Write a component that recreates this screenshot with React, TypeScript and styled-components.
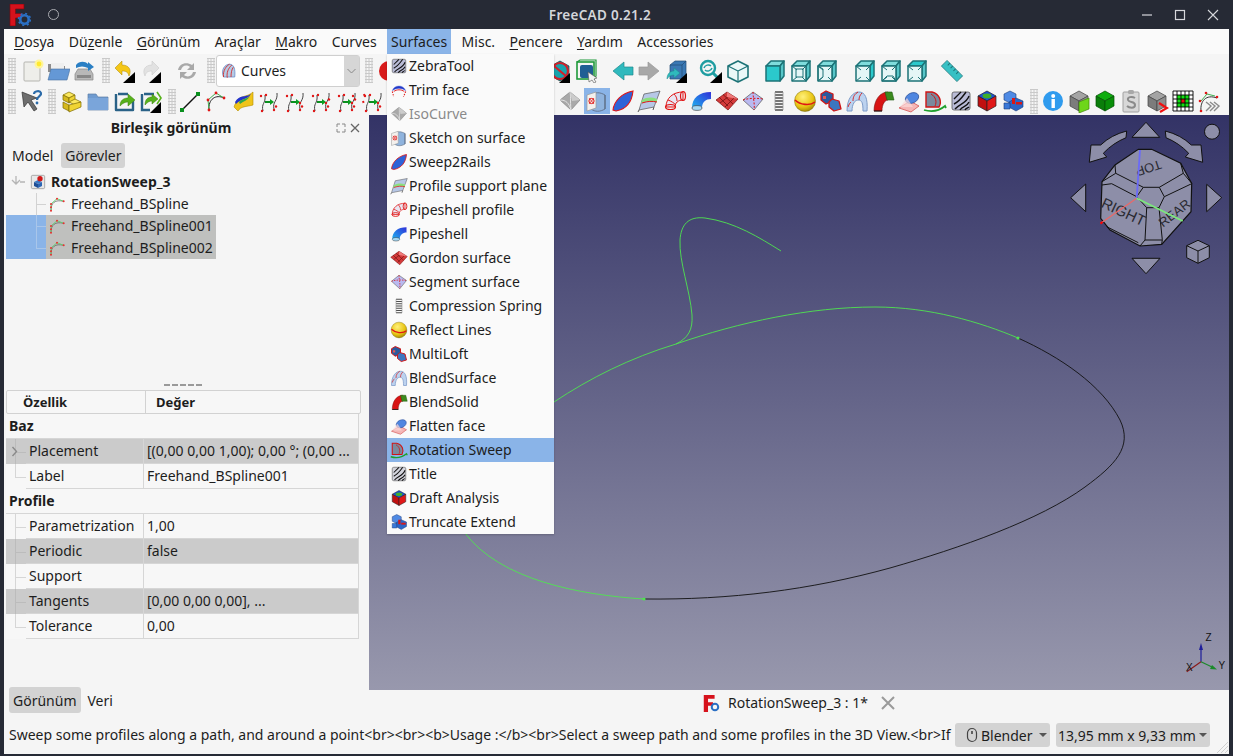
import React from "react";
import styled, { createGlobalStyle } from "styled-components";

const Global = createGlobalStyle`
  html, body { margin: 0; padding: 0; height: 100%; background: #262a35; }
  #root { height: 100%; }
  * { box-sizing: border-box; }
`;

const cube = (t: string, l: string, r: string, s = "#333") => (
  <g stroke={s} strokeWidth="0.7" strokeLinejoin="round">
    <polygon points="12,2 21,7 12,12 3,7" fill={t} />
    <polygon points="3,7 12,12 12,22 3,17" fill={l} />
    <polygon points="21,7 12,12 12,22 21,17" fill={r} />
  </g>
);

type Face = "front" | "back" | "left" | "right" | "top" | "bottom";
const viewCube = (face: Face) => {
  const on = "#2bc9cc";
  const off = "#e4f6f6";
  const st = { stroke: "#1d7377", strokeWidth: 1.5, strokeLinejoin: "round" as const };
  const inner = { stroke: "#1d7377", strokeWidth: 1, fill: "none" };
  return (
    <g>
      <polygon points="3,7 8,2 21,2 17,7" fill={face === "top" ? on : "#7fdcdc"} {...st} />
      <polygon points="17,7 21,2 21,17 17,22" fill={face === "right" ? on : "#57c6c8"} {...st} />
      <rect x="3" y="7" width="14" height="15" fill={face === "front" ? on : off} {...st} />
      {face === "back" && <rect x="7" y="10" width="7" height="8" fill={on} {...inner} />}
      {face === "left" && <polygon points="3,7 8,10 8,18 3,22" fill={on} {...inner} />}
      {face === "bottom" && <polygon points="3,22 8,17 14,17 17,22" fill={on} {...inner} />}
      {face !== "front" && <path d="M3 7l5 4M17 7l-4 4M3 22l5-4M17 22l-4-4" {...inner} />}
    </g>
  );
};

const zebra = (bg: string) => (
  <g>
    <rect x="3" y="3" width="18" height="18" rx="2" fill={bg} stroke="#555" strokeWidth="0.8" />
    <path d="M5 10C9 6 10 5 12 3M5 15c6-3 9-8 12-12M6 20c4-5 12-6 14-13M11 21c2-4 7-3 9-8M16 21c1-2 3-2 4-3" fill="none" stroke="#111" strokeWidth="1.4" />
  </g>
);

const splineArrow = (dots: number) => (
  <g>
    <path d="M6 22C4 14 9 15 8 6" fill="none" stroke="#444" strokeWidth="1" />
    <path d="M17 20c-2-7 4-8 3-16" fill="none" stroke="#444" strokeWidth="1" />
    <path d="M8 13h6" stroke="#0a8f1e" strokeWidth="2" />
    <path d="M13 10l4 3-4 3z" fill="#0a9f22" />
    {[[5, 22], [4, 7], [9, 6]].map(([x, y], i) => <circle key={i} cx={x} cy={y} r="1.2" fill="#e01515" />)}
    {Array.from({ length: dots }).map((_, i) => (
      <circle key={`d${i}`} cx={17 + (i % 2) * 2 + (i > 2 ? 1 : 0)} cy={21 - i * 3.5} r="1.2" fill="#e01515" />
    ))}
  </g>
);

const freehand = (
  <g fill="none">
    <path d="M3 22C3 10 9 5 22 8" stroke="#555" strokeWidth="1" />
    <path d="M3 22L3 12 12 4 22 8" stroke="#5fd06e" strokeWidth="1.4" />
    {[[3, 22], [3, 12], [12, 4], [22, 8], [3, 17]].map(([x, y], i) => <circle key={i} cx={x} cy={y} r="1.5" fill="#e83030" />)}
  </g>
);

const icons: Record<string, React.ReactNode> = {
  newDoc: <g><rect x="4" y="3" width="16" height="19" rx="1" fill="#eeeeea" stroke="#b5b5b0" /><circle cx="19" cy="5" r="4.5" fill="#fff59a" /><circle cx="19" cy="5" r="2.4" fill="#ffe92e" /></g>,
  open: <g><path d="M2 5h7l2 2h8v6H2z" fill="#8d8d8d" /><rect x="5" y="4" width="13" height="9" fill="#efefef" /><path d="M5 10h19l-3 11H2z" fill="#6498d6" stroke="#47719f" strokeWidth=".6" /></g>,
  save: <g><path d="M3 15l3-5h12l3 5v6H3z" fill="#b8b8b8" stroke="#888" strokeWidth=".7" /><rect x="5" y="16" width="14" height="3" fill="#888" /><path d="M4 6c3-4 9-4 12-1v-2l6 5-6 4V9C12 7 8 7 4 9z" fill="#2a7fc4" /></g>,
  undo: <g><path d="M3 9l7-7v4c7 0 10 5 7 11-1-4-3-5-7-5v4z" fill="#f5c717" stroke="#a98500" strokeWidth=".5" /><polygon points="23,13 23,24 11,24" fill="#000" /></g>,
  redo: <g><path d="M21 9l-7-7v4C7 6 4 11 7 17c1-4 3-5 7-5v4z" fill="#e2e2e2" stroke="#c4c4c4" strokeWidth=".5" /><polygon points="23,13 23,24 11,24" fill="#000" /></g>,
  refresh: <g fill="#a9a9a9"><path d="M3 11C4 5 11 2 17 6l2-2v7h-7l3-3c-4-3-8-1-9 3z" /><path d="M21 13c-1 6-8 9-14 5l-2 2v-7h7l-3 3c4 3 8 1 9-3z" /></g>,
  curvesWB: <g fill="none"><path d="M6 20C2 10 8 3 14 3s8 6 7 17z" fill="#b6cbe6" stroke="#6488c4" /><path d="M6 20C5 11 10 5 14 3M11 21c-1-7 1-12 6-17M16 20c0-6 1-10 3-13" stroke="#d42b2b" strokeWidth="1.2" /></g>,
  help: <g><path d="M3 3l15 6-6 2 6 9-3 2-6-9-4 5z" fill="#6e6e6e" stroke="#333" strokeWidth=".7" /><path d="M15 5c0-3 6-4 7-1 1 3-4 3-4 7" fill="none" stroke="#2a6aa8" strokeWidth="2.2" /><circle cx="18" cy="14" r="1.4" fill="#2a6aa8" /></g>,
  parts: <g stroke="#7d6a00" strokeWidth=".7" strokeLinejoin="round"><polygon points="9,3 15,6 9,9 3,6" fill="#fbe85e" /><polygon points="3,6 9,9 9,14 3,11" fill="#d6b91e" /><polygon points="15,6 9,9 9,14 15,11" fill="#f0d433" /><polygon points="15,10 21,13 15,16 9,13" fill="#fbe85e" /><polygon points="3,13 9,16 9,22 3,19" fill="#d6b91e" /><polygon points="21,13 21,18 9,23 9,16" fill="#f0d433" /></g>,
  folder: <g><path d="M2 5h8l2 3h10v13H2z" fill="#6f9bd0" stroke="#5e7fa7" strokeWidth=".7" /><rect x="2" y="9" width="20" height="12" fill="#7aa5da" /></g>,
  boxArrow: <g><path d="M6 5h10M4 5v16h17v-9" fill="none" stroke="#2a6287" strokeWidth="2.4" strokeLinejoin="round" /><path d="M8 17c0-6 4-8 8-8V5l7 6-7 6v-4c-3 0-5 1-8 4z" fill="#57b11b" stroke="#3c7f10" strokeWidth=".5" /></g>,
  boxArrow2: <g><path d="M6 5h10M4 5v16h8" fill="none" stroke="#2a6287" strokeWidth="2.4" /><path d="M7 16c0-6 3-8 7-8V5l6 5-6 5v-3c-3 0-4 1-7 4z" fill="#57b11b" stroke="#3c7f10" strokeWidth=".5" /><path d="M19 3l4 6-4 6" fill="none" stroke="#57b11b" strokeWidth="1.6" /><polygon points="23,13 23,24 12,24" fill="#000" /></g>,
  line: <g><path d="M4 21L20 5" stroke="#111" strokeWidth="1.4" /><rect x="2" y="19" width="4" height="4" fill="#0a8f1e" /><rect x="18" y="3" width="4" height="4" fill="#0a8f1e" /></g>,
  arc: <g fill="none"><path d="M5 21C4 10 12 5 20 9" stroke="#222" strokeWidth="1" /><path d="M5 21L4 11 12 4 20 9" stroke="#3fae4d" strokeWidth="1" />{[[5, 21], [4, 11], [12, 4], [20, 9]].map(([x, y], i) => <circle key={i} cx={x} cy={y} r="1.4" fill="#e01515" />)}</g>,
  surfY: <g><path d="M3 18C8 4 14 10 22 3v13c-7 2-12 1-15 6z" fill="#f0c419" stroke="#b28d00" strokeWidth=".6" /><path d="M4 13C9 5 14 9 20 5c-4 6-9 4-15 10z" fill="#2233cc" /><path d="M8 13c4-4 7-2 11-6-2 4-6 5-10 8z" fill="#2ea84a" /></g>,
  sp1: splineArrow(2), sp2: splineArrow(3), sp3: splineArrow(4), sp4: splineArrow(5),
  sp5: <g>{splineArrow(3)}<path d="M3 5l1 3M2 12l1 3" stroke="#e01515" strokeWidth="2" strokeDasharray="2 2" /></g>,
  record: <circle cx="12" cy="12" r="10" fill="#d81a1a" />,
  stop: <g><polygon points="12,2 21,7 21,17 12,22 3,17 3,7" fill="#16a3ad" stroke="#111" strokeWidth=".6" /><circle cx="12" cy="12" r="8" fill="none" stroke="#d0202a" strokeWidth="2.2" /><path d="M6 7l12 10" stroke="#d0202a" strokeWidth="2.2" /><polygon points="22,14 22,24 11,24" fill="#000" /></g>,
  selectBox: <g><rect x="3" y="3" width="17" height="17" fill="none" stroke="#1f9a3a" strokeWidth="1.6" /><path d="M3 3l3-2h16v16l-2 3" fill="none" stroke="#1f9a3a" strokeWidth="1.2" /><rect x="6" y="6" width="13" height="13" rx="2" fill="#1f5e94" /><path d="M14 13l9 6-3 1 2 3-2 1-2-3-3 2z" fill="#f3f3f3" stroke="#555" strokeWidth=".6" /></g>,
  arrowL: <polygon points="2,12 13,3 13,8 22,8 22,16 13,16 13,21" fill="#2fb9bd" stroke="#1f8a8d" strokeWidth=".7" />,
  arrowR: <polygon points="22,12 11,3 11,8 2,8 2,16 11,16 11,21" fill="#a8a8a8" stroke="#999" strokeWidth=".7" />,
  boxView: <g><polygon points="6,6 11,2 22,2 22,16 18,20 6,20" fill="#3a78b4" stroke="#234a73" strokeWidth=".7" /><path d="M6 6h12v14M18 6l4-4" stroke="#234a73" fill="none" strokeWidth=".7" /><path d="M3 20c0-6 4-8 7-8V9l6 5-6 5v-3c-3 0-5 1-7 4z" fill="#2fb9bd" stroke="#1f8a8d" strokeWidth=".5" /><polygon points="23,14 23,24 12,24" fill="#000" /></g>,
  searchView: <g><circle cx="9" cy="9" r="7" fill="none" stroke="#1f9da1" strokeWidth="2.4" /><path d="M5 9c1-3 5-4 7-2M13 9c-1 3-5 4-7 2" fill="none" stroke="#1f9da1" strokeWidth="1.5" /><path d="M14 14l5 5" stroke="#1f9da1" strokeWidth="3" /><polygon points="23,13 23,24 11,24" fill="#000" /></g>,
  wire: <g fill="#eaf8f8" stroke="#1d7377" strokeWidth="1.6" strokeLinejoin="round"><polygon points="12,2 22,7 22,18 12,23 2,18 2,7" /><path d="M2 7l10 5 10-5M12 12v11" fill="none" strokeWidth="1.2" /></g>,
  vFront: viewCube("front"), vBack: viewCube("back"), vLeft: viewCube("left"),
  vWire1: viewCube("right"), vWire2: viewCube("bottom"), vWire3: viewCube("top"),
  ruler: <g transform="rotate(45 12 12)"><rect x="1" y="8" width="22" height="8" fill="#37c0c4" stroke="#1d7377" strokeWidth=".7" /><path d="M5 8v3M9 8v3M13 8v3M17 8v3" stroke="#1d7377" /></g>,
  info: <g><circle cx="12" cy="12" r="10" fill="#2f9bee" /><rect x="10.5" y="10" width="3.4" height="9" fill="#fff" /><circle cx="12.2" cy="7" r="2" fill="#fff" /></g>,
  cubeGreenPlane: <g>{cube("#a4a4a4", "#7c7c7c", "#8e8e8e", "#444")}<polygon points="12,13 22,9 22,20 12,24" fill="#6ed61a" stroke="#3f8a07" strokeWidth=".7" /></g>,
  cubeGreen: cube("#0fad0f", "#0a7e0a", "#098f09", "#054d05"),
  clipS: <g><rect x="4" y="3" width="16" height="20" rx="1" fill="#d8d8d8" stroke="#a0a0a0" /><rect x="9" y="1" width="6" height="4" rx="1.5" fill="#a8a8a8" /><path d="M16 9c-3-2-8-1-7 2 1 3 7 1 7 5s-6 3-8 1" fill="none" stroke="#8a8a8a" strokeWidth="2" /></g>,
  cubeChevron: <g>{cube("#a4a4a4", "#7c7c7c", "#8e8e8e", "#444")}<path d="M14 14l8 5-7 4" fill="none" stroke="#f01010" strokeWidth="2.2" /></g>,
  gridTarget: <g><rect x="2" y="2" width="20" height="20" fill="#fff" /><rect x="6" y="6" width="12" height="12" fill="#12df12" /><rect x="10" y="10" width="4" height="4" fill="#e41010" /><path d="M2 2v20M6 2v20M10 2v20M14 2v20M18 2v20M22 2v20M2 2h20M2 6h20M2 10h20M2 14h20M2 18h20M2 22h20" stroke="#000" strokeWidth=".9" /></g>,
  splineChev: <g fill="none"><path d="M4 22C3 12 9 5 20 9" stroke="#333" /><path d="M4 12l6-7 8 2" stroke="#3fae4d" />{[[4, 22], [3, 12], [9, 4], [20, 8]].map(([x, y], i) => <circle key={i} cx={x} cy={y} r="1.3" fill="#e01515" />)}<path d="M9 13l5 4-5 5M13 13l5 4-5 5M17 13l5 4-5 5" stroke="#8a8a8a" strokeWidth="1.4" /></g>,
  freehand,
  doc: <g><rect x="2" y="2" width="20" height="20" rx="2" fill="#e8e8e8" stroke="#8a8a8a" /><polygon points="12,9 18,12 12,15 6,12" fill="#3a78c4" /><polygon points="6,12 12,15 12,21 6,18" fill="#1f4f96" /><polygon points="18,12 12,15 12,21 18,18" fill="#2c66b4" /><circle cx="15" cy="7" r="4" fill="#d01818" /></g>,
  zebraT: zebra("#b9bbd6"), title: zebra("#d3d4dd"),
  trim: <g><path d="M3 13C5 5 18 4 21 13 15 9 9 9 3 13z" fill="#2238c8" stroke="#6a7fe0" strokeWidth=".6" /><path d="M3 14l2 7M21 14l-3 7" stroke="#e01515" strokeWidth="1.4" strokeDasharray="2 1.5" /><path d="M5 14c4-3 10-3 14 0" fill="none" stroke="#e01515" strokeWidth="1.2" /></g>,
  iso: <g><polygon points="12,3 22,11 13,21 2,11" fill="#a9a9a9" stroke="#777" strokeWidth=".6" /><path d="M2 11c6 0 9 3 11 10M12 3c1 4 0 8 1 18" fill="none" stroke="#e3e3e3" /><polygon points="12,3 22,11 14,12" fill="#ccc" /></g>,
  sketchSurf: <g><path d="M6 6c4-3 9-3 14 0v14c-5 3-10 3-14 0z" fill="#8fb3dd" stroke="#5a6a80" strokeWidth=".8" /><path d="M20 6v14" stroke="#5a6a80" /><polygon points="2,6 11,3 11,19 2,22" fill="#f3f1ee" stroke="#999" strokeWidth=".7" /><circle cx="6.5" cy="12" r="2.6" fill="none" stroke="#e01515" /><path d="M4 15l5-6M4 9l5 6" stroke="#e01515" strokeWidth=".7" /></g>,
  sweep2: <path d="M2 21C3 12 11 4 22 2c-1 10-6 18-17 20z" fill="#2f63d8" stroke="#e01515" strokeWidth="1.1" />,
  profile: <g><polygon points="2,21 7,5 23,2 17,18" fill="#b7c7e6" stroke="#555" strokeWidth=".7" /><path d="M5 11c5-3 10-3 15-1v3c-6-2-10-1-16 1z" fill="#8be07e" /><path d="M5 14c6-2 10-2 15-1" stroke="#e01515" fill="none" /><path d="M2 21l-1 2M17 18l-1 3" stroke="#555" /></g>,
  pipeProfile: <g fill="none" stroke="#e01515"><path d="M3 18C3 9 10 3 20 3v8c-5 0-8 3-8 7z" fill="#e9e6f2" /><ellipse cx="7.5" cy="18" rx="5" ry="2.5" strokeWidth="1.2" /><ellipse cx="20" cy="7" rx="2.5" ry="4.5" strokeWidth="1.2" /><path d="M5 11c3 1 6 3 8 5M11 5c2 2 3 4 3 7" strokeWidth="1" /></g>,
  pipeshell: <g><defs><linearGradient id="pipeg" x1="0" y1="1" x2="1" y2="0"><stop offset="0" stopColor="#1fb4f0" /><stop offset="1" stopColor="#2f2fd8" /></linearGradient></defs><path d="M3 19C3 9 10 3 22 3v7c-5 0-9 3-9 9z" fill="url(#pipeg)" /><ellipse cx="8" cy="19" rx="5" ry="2.4" fill="#a4d8f4" stroke="#333" strokeWidth=".6" /></g>,
  gordon: <g><polygon points="12,3 23,10 13,21 1,11" fill="#d43a3a" stroke="#7a1010" strokeWidth=".7" /><path d="M8 5.5L18 15M4 8l9 9M16 5.6L5 14M20 8l-10 10" stroke="#701010" strokeWidth=".8" fill="none" /><polygon points="12,3 23,10 12,8" fill="#ef7a7a" /></g>,
  segment: <g><polygon points="12,3 22,10 13,21 2,11" fill="#b9b9f0" stroke="#555" strokeWidth=".7" /><path d="M12 3c0 6 2 12 1 18M2 11c6-2 14-2 20-1" stroke="#e01515" strokeDasharray="2 1.5" fill="none" /></g>,
  spring: <g stroke="#4e4e4e" strokeWidth="1.4" fill="none"><path d="M8 3h8M8 6h8M8 9h8M8 12h8M8 15h8M8 18h8M8 21h8" /><path d="M8 3v18M16 3v18" stroke="#999" strokeWidth=".8" /></g>,
  sphere: <g><defs><radialGradient id="sphg" cx=".4" cy=".3" r=".8"><stop offset="0" stopColor="#fff07a" /><stop offset=".6" stopColor="#e8c412" /><stop offset="1" stopColor="#8c7400" /></radialGradient></defs><circle cx="12" cy="12" r="10.5" fill="url(#sphg)" stroke="#7a6a00" strokeWidth=".5" /><path d="M2 11c5 5 15 6 20 2" fill="none" stroke="#e01515" strokeWidth="1.6" /></g>,
  multiloft: <g stroke="#d01515" strokeWidth="1.3" strokeLinejoin="round"><polygon points="7,2 14,5 14,12 7,15 2,11 2,5" fill="#2a5a9e" /><polygon points="13,10 20,12 22,20 15,22 10,18 10,13" fill="#3d76c0" /><rect x="4" y="7" width="3" height="3" fill="#e05a5a" stroke="none" /></g>,
  blendSurf: <g fill="none"><path d="M2 22C2 9 8 3 14 3s9 6 8 19h-4c0-8-1-11-5-11-3 0-6 4-6 11z" fill="#bcd2ef" stroke="#7d9bc8" /><path d="M8 12C8 7 10 5 13 3M14 11c0-3 1-5 3-7" stroke="#d42b2b" /><path d="M3 18c1-3 2-4 3-5" stroke="#d42b2b" /></g>,
  blendSolid: <g><path d="M3 22C3 11 9 3 17 3v8c-3 0-6 4-6 11z" fill="#d81414" stroke="#7a1010" strokeWidth=".6" /><path d="M14 3h7l2 8h-7z" fill="#3c8a1e" stroke="#1f5a10" strokeWidth=".6" /><path d="M3 22h8" stroke="#111" /></g>,
  flatten: <g><polygon points="2,19 13,12 22,17 14,23" fill="#f4b6b6" stroke="#d04040" strokeWidth=".7" /><ellipse cx="15" cy="9" rx="7" ry="5" fill="#4f86e0" stroke="#2a4f9a" strokeWidth=".7" transform="rotate(-25 15 9)" /><path d="M3 18l7-9 6 9" fill="#fbd9d9" opacity=".7" /></g>,
  rotSweep: <g><path d="M3 3h6c8 2 10 10 7 15H3z" fill="#7b8a9e" stroke="#d01515" strokeWidth="1.4" /><path d="M8 5c5 3 6 8 4 12" fill="none" stroke="#d01515" /><path d="M1 21c7 2 15 1 21-4l1 2" fill="none" stroke="#1fa02c" strokeWidth="1.8" /></g>,
  draft: <g>{cube("#1a4fd8", "#c01010", "#e01818", "#222")}<ellipse cx="12" cy="7" rx="4.5" ry="2.4" fill="#3fae2a" /></g>,
  truncate: <g stroke="#1a3a78" strokeWidth=".6" strokeLinejoin="round"><polygon points="9,2 15,5 15,11 9,14 3,11 3,5" fill="#4f8ae4" /><polygon points="15,9 22,12 22,18 15,22 8,18 8,13" fill="#2a66c8" /><rect x="11" y="9" width="3" height="6" fill="#d81818" stroke="none" /><rect x="15" y="13" width="6" height="2.5" fill="#d81818" stroke="none" /><rect x="3" y="14" width="6" height="6" fill="#3a78d8" /></g>,
};

const Svg = styled.svg<{ $size: number }>`
  width: ${(p) => p.$size}px;
  height: ${(p) => p.$size}px;
  flex: none;
  display: block;
`;

const Icon = ({ name, size = 24 }: { name: string; size?: number }) => (
  <Svg $size={size} viewBox="0 0 24 24" aria-hidden="true">{icons[name]}</Svg>
);

const Window = styled.div`
  height: 756px;
  width: 1233px;
  overflow: hidden;
  display: flex;
  flex-direction: column;
  padding: 0 4px 2px;
  background: #262a35;
  font-family: "Noto Sans", sans-serif;
  font-size: 14px;
  color: #1d1d1d;
`;

const TitleBar = styled.header`
  height: 29px;
  flex: none;
  display: flex;
  align-items: center;
  color: #d4d6da;
`;
const Logo = styled.div`
  width: 22px;
  height: 22px;
  margin: 0 0 0 5px;
  flex: none;
`;
const PinDot = styled.span`
  width: 11px;
  height: 11px;
  margin-left: 17px;
  border-radius: 50%;
  border: 1.5px solid #a9abb0;
  flex: none;
`;
const TitleText = styled.div`
  flex: 1;
  text-align: center;
  font-size: 13.5px;
  font-weight: 600;
  letter-spacing: 0.3px;
  padding-left: 4px;
`;
const WinButtons = styled.div`
  display: flex;
  gap: 13px;
  margin-right: 6px;
`;
const WinBtn = styled.svg`
  width: 20px;
  height: 20px;
  display: block;
`;

const Content = styled.div`
  flex: 1;
  min-height: 0;
  position: relative;
  display: flex;
  flex-direction: column;
  background: #f5f5f5;
`;

const MenuBar = styled.nav`
  height: 25px;
  flex: none;
  display: flex;
  gap: 6.4px;
  padding-left: 6px;
  background: #fafafa;
`;
const MenuItem = styled.div<{ $open?: boolean }>`
  padding: 0 4px;
  line-height: 25px;
  background: ${(p) => (p.$open ? "#8ab4e8" : "transparent")};
  white-space: nowrap;
  u { text-underline-offset: 2px; text-decoration-thickness: 1px; }
`;

const ToolRow = styled.div<{ $h: number }>`
  height: ${(p) => p.$h}px;
  flex: none;
  display: flex;
  align-items: center;
`;
const Grip = styled.span<{ $ml: number; $mr: number }>`
  width: 8px;
  height: 25px;
  margin: 0 ${(p) => p.$mr}px 0 ${(p) => p.$ml}px;
  flex: none;
  background-image: radial-gradient(circle, #c9c9c9 1px, transparent 1.1px);
  background-size: 3px 3px;
  background-position: center;
`;
const ToolBtn = styled.div<{ $active?: boolean }>`
  width: 26px;
  height: 26px;
  flex: none;
  display: flex;
  align-items: center;
  justify-content: center;
  background: ${(p) => (p.$active ? "#8ab4e8" : "transparent")};
`;
const Spacer = styled.span<{ $w: number }>`
  width: ${(p) => p.$w}px;
  flex: none;
`;
const WorkbenchCombo = styled.div`
  width: 144px;
  height: 32px;
  margin-left: 1px;
  flex: none;
  display: flex;
  align-items: stretch;
  background: #fff;
  border: 1px solid #cfcfcf;
  border-radius: 3px;
`;
const ComboLabel = styled.div`
  flex: 1;
  display: flex;
  align-items: center;
  gap: 4px;
  padding-left: 2px;
`;
const ComboArrow = styled.div`
  width: 15px;
  display: flex;
  align-items: center;
  justify-content: center;
  background: #d6d6d6;
`;

const Main = styled.div`
  flex: 1;
  min-height: 0;
  display: flex;
`;
const Sidebar = styled.aside`
  width: 365px;
  flex: none;
  display: flex;
  flex-direction: column;
  padding-left: 2px;
`;
const DockHeader = styled.div`
  height: 25px;
  display: flex;
  align-items: center;
  flex: none;
`;
const DockTitle = styled.div`
  flex: 1;
  text-align: center;
  font-weight: 700;
  font-size: 14px;
`;
const DockButtons = styled.div`
  display: flex;
  gap: 4px;
  width: 29px;
  margin-right: 4px;
  color: #777;
`;
const TabStrip = styled.div`
  display: flex;
  gap: 4px;
  height: 25px;
  margin: 3px 0 0 2px;
  flex: none;
`;
const Tab = styled.div<{ $active?: boolean; $lh?: number }>`
  padding: 0 4px;
  line-height: ${(p) => p.$lh ?? 25}px;
  border-radius: 3px;
  background: ${(p) => (p.$active ? "#d3d3d3" : "transparent")};
`;
const Tree = styled.div`
  margin-top: 3px;
  height: 213px;
  flex: none;
`;
const TreeRow = styled.div`
  height: 22px;
  display: flex;
  align-items: stretch;
`;
const TreeIndent = styled.div<{ $selected?: boolean; $end?: boolean }>`
  width: 40px;
  flex: none;
  position: relative;
  background: ${(p) => (p.$selected ? "#8ab4e8" : "transparent")};
  &::before {
    content: "";
    position: absolute;
    left: 30px;
    top: 0;
    bottom: ${(p) => (p.$end ? "50%" : "0")};
    border-left: 1px solid ${(p) => (p.$selected ? "#a9c6ea" : "#d2d2d2")};
  }
  &::after {
    content: "";
    position: absolute;
    left: 30px;
    width: 10px;
    top: 50%;
    border-top: 1px solid ${(p) => (p.$selected ? "#a9c6ea" : "#d2d2d2")};
  }
`;
const TreeRootBranch = styled.div`
  width: 24px;
  flex: none;
  display: flex;
  align-items: center;
  padding-left: 3px;
`;
const TreeLabel = styled.div<{ $selected?: boolean }>`
  display: flex;
  align-items: center;
  gap: 6px;
  padding: 0 3px 0 3px;
  background: ${(p) => (p.$selected ? "#bfc0be" : "transparent")};
`;
const RootLabel = styled.div`
  display: flex;
  align-items: center;
  gap: 5px;
  font-weight: 700;
`;
const RowText = styled.span`
  padding-bottom: 2px;
`;
const Splitter = styled.div`
  width: 38px;
  height: 2px;
  margin: 0 0 4px 158px;
  flex: none;
  background: repeating-linear-gradient(90deg, #9a9a9a 0 6px, transparent 6px 8px);
`;
const PropTable = styled.div`
  width: 353px;
  flex: none;
`;
const PropHeader = styled.div`
  width: 355px;
  height: 24px;
  display: grid;
  grid-template-columns: 138px 1fr;
  border: 1px solid #d2d2d2;
  border-radius: 2px;
  background: #f7f7f7;
  font-weight: 700;
  font-size: 13px;
  line-height: 22px;
`;
const HeadCell = styled.div`
  padding-left: 16px;
  & + & { border-left: 1px solid #d2d2d2; padding-left: 10px; }
`;
const PropBody = styled.div`
  border-right: 1px solid #d6d6d6;
  background: #f7f7f7;
`;
const GroupRow = styled.div`
  height: 25px;
  line-height: 24px;
  padding-left: 3px;
  font-weight: 700;
  border-bottom: 1px solid #d6d6d6;
`;
const PropRow = styled.div<{ $alt?: boolean }>`
  height: 25px;
  display: grid;
  grid-template-columns: 20px 117px 1fr;
  background: ${(p) => (p.$alt ? "#cbcbcb" : "#f7f7f7")};
  line-height: 24px;
`;
const Branch = styled.div<{ $last?: boolean; $alt?: boolean }>`
  position: relative;
  &::before {
    content: "";
    position: absolute;
    left: 9px;
    top: 0;
    bottom: ${(p) => (p.$last ? "50%" : "0")};
    border-left: 1px solid ${(p) => (p.$alt ? "#bcbcbc" : "#d6d6d6")};
  }
  &::after {
    content: "";
    position: absolute;
    left: 9px;
    width: 11px;
    top: 50%;
    border-top: 1px solid ${(p) => (p.$alt ? "#bcbcbc" : "#d6d6d6")};
  }
`;
const Chevron = styled.svg`
  position: absolute;
  left: 5px;
  top: 7px;
  width: 8px;
  height: 11px;
  z-index: 1;
`;
const PropName = styled.div`
  padding-left: 3px;
  border-bottom: 1px solid #d6d6d6;
  white-space: nowrap;
`;
const PropValue = styled.div`
  padding-left: 3px;
  border-left: 1px solid #d6d6d6;
  border-bottom: 1px solid #d6d6d6;
  white-space: nowrap;
  overflow: hidden;
`;
const SideTabs = styled.div`
  margin: auto 0 3px 3px;
  display: flex;
  gap: 3px;
  height: 26px;
  flex: none;
`;

const ViewColumn = styled.div`
  flex: 1;
  min-width: 0;
  display: flex;
  flex-direction: column;
`;
const Viewport = styled.div`
  flex: 1;
  min-height: 0;
  position: relative;
  background: linear-gradient(#333366, #9898ad);
`;
const Scene = styled.svg`
  position: absolute;
  inset: 0;
  width: 100%;
  height: 100%;
  display: block;
`;
const DocTabs = styled.div`
  height: 26px;
  flex: none;
  display: flex;
  align-items: center;
  padding-left: 334px;
  gap: 8px;
`;
const DocClose = styled.svg`
  width: 16px;
  height: 16px;
  margin-left: 4px;
`;

const StatusBar = styled.footer`
  height: 38px;
  flex: none;
  display: flex;
  align-items: center;
  padding: 0 19px 0 5px;
  position: relative;
`;
const StatusText = styled.div`
  flex: 1;
  min-width: 0;
  white-space: nowrap;
  padding-bottom: 2px;
`;
const StatusCombo = styled.div<{ $w: number }>`
  width: ${(p) => p.$w}px;
  height: 24px;
  margin-left: 6px;
  flex: none;
  display: flex;
  align-items: center;
  padding: 0 2px;
  gap: 3px;
  white-space: nowrap;
  background: #d3d3d3;
  border-radius: 3px;
  position: relative;
`;
const Caret = styled.span`
  width: 0;
  height: 0;
  margin-left: auto;
  margin-right: 1px;
  border: 4px solid transparent;
  border-top-color: #555;
  border-bottom: 0;
`;
const SizeGrip = styled.svg`
  position: absolute;
  right: 1px;
  bottom: 1px;
  width: 11px;
  height: 11px;
`;

const DropMenu = styled.div`
  position: absolute;
  top: 25px;
  left: 383px;
  width: 167px;
  background: #fafafa;
  box-shadow: 0 1px 2px rgba(0, 0, 0, 0.2);
  z-index: 5;
`;
const DropItem = styled.div<{ $hot?: boolean; $off?: boolean }>`
  height: 24px;
  display: flex;
  align-items: center;
  gap: 1px;
  padding-left: 3px;
  white-space: nowrap;
  background: ${(p) => (p.$hot ? "#8ab4e8" : "transparent")};
  color: ${(p) => (p.$off ? "#8a8a8a" : "#1d1d1d")};
`;

const menuBar: React.ReactNode[] = [
  <><u>D</u>osya</>, <>Dü<u>z</u>enle</>, <><u>G</u>örünüm</>, <>Araçlar</>, <><u>M</u>akro</>, <>Curves</>,
  <>Surfaces</>, <>Misc.</>, <><u>P</u>encere</>, <><u>Y</u>ardım</>, <>Accessories</>,
];

const dropItems = [
  ["zebraT", "ZebraTool"], ["trim", "Trim face"], ["iso", "IsoCurve"], ["sketchSurf", "Sketch on surface"],
  ["sweep2", "Sweep2Rails"], ["profile", "Profile support plane"], ["pipeProfile", "Pipeshell profile"],
  ["pipeshell", "Pipeshell"], ["gordon", "Gordon surface"], ["segment", "Segment surface"],
  ["spring", "Compression Spring"], ["sphere", "Reflect Lines"], ["multiloft", "MultiLoft"],
  ["blendSurf", "BlendSurface"], ["blendSolid", "BlendSolid"], ["flatten", "Flatten face"],
  ["rotSweep", "Rotation Sweep"], ["title", "Title"], ["draft", "Draft Analysis"], ["truncate", "Truncate Extend"],
];

const Tools = ({ names }: { names: string[] }) => (
  <>{names.map((n, i) => <ToolBtn key={i} $active={n === "sketchSurf"}><Icon name={n} /></ToolBtn>)}</>
);

const ArcArrow = ({ mirror }: { mirror?: boolean }) => (
  <path
    transform={mirror ? "translate(2292 0) scale(-1 1)" : undefined}
    d="M1126.7 131Q1111 135 1100.7 145L1091 145L1089.3 162.3L1106.7 157L1103.3 153.3Q1113 143 1126 137.7Z"
    fill="#8d8ea8" stroke="#111" strokeWidth="1"
  />
);

const Tri = ({ p }: { p: string }) => <polygon points={p} fill="#8d8ea8" stroke="#111" strokeWidth="1" />;

const NavCube = () => (
  <g>
    <Tri p="1146,122.3 1159.7,137.3 1132,137.3" />
    <Tri p="1070.7,197.7 1085.7,184 1085.7,211.7" />
    <Tri p="1221.7,197.7 1206.7,184.3 1206.7,211.7" />
    <Tri p="1132,258.3 1160,258.3 1146,273.7" />
    <ArcArrow />
    <ArcArrow mirror />
    <circle cx="1212" cy="131.7" r="7.5" fill="#8d8ea8" stroke="#111" />
    <polygon points="1198,240.3 1209.3,245.7 1209.3,257.7 1198,263.3 1186.7,257.7 1186.7,245.7" fill="#8d8ea8" stroke="#111" />
    <path d="M1186.7 245.7L1198 251L1209.3 245.7M1198 251V263.3" fill="none" stroke="#111" />
    <polygon points="1138.3,149.3 1151.7,149.3 1180.7,163.3 1191.7,183.3 1191,211.7 1161.7,244.3 1140,246 1110,230 1100.7,218.3 1102,181.7 1115,165" fill="#8d8ea8" stroke="#111" strokeWidth="1.2" />
    <path
      d="M1115 165L1115.7 173.3L1143.3 187.3H1159.3L1183.3 173.3L1180.7 163.3M1115.7 173.3L1102 181.7M1183.3 173.3L1191.7 183.3M1102 185L1111.7 183.7L1136.7 196.7M1143.3 187.3L1136.7 196.7L1146.7 207.7H1159L1164.3 196.7L1159.3 187.3M1164.3 196.7L1191 184M1146.7 207.7L1145 240L1140 246M1159 207.7L1162.3 239.7L1161.7 244.3M1145 240H1162.3M1106.7 226.7L1138.3 242.7"
      fill="none" stroke="#111" strokeWidth="1"
    />
    <text x="1148.3" y="167" transform="rotate(162 1148.3 167)" textAnchor="middle" dominantBaseline="middle" fontFamily="'Liberation Sans', sans-serif" fontSize="13" fill="#2a2a32">TOP</text>
    <text x="1123" y="213" transform="rotate(25 1123 213)" textAnchor="middle" dominantBaseline="middle" fontFamily="'Liberation Sans', sans-serif" fontSize="15" fill="#2a2a32">RIGHT</text>
    <text x="1175" y="214" transform="rotate(-38 1175 214)" textAnchor="middle" dominantBaseline="middle" fontFamily="'Liberation Sans', sans-serif" fontSize="13" fill="#2a2a32">REAR</text>
    <path d="M1136.7 198.3L1140 150" stroke="#6a6af8" strokeWidth="1.8" />
    <path d="M1136.7 198.3L1100.7 223.3" stroke="#e86a6a" strokeWidth="1.4" />
    <path d="M1102.5 222l-2 1.6" stroke="#f00" strokeWidth="2" />
    <path d="M1136.7 198.3L1182.7 221" stroke="#7ce87c" strokeWidth="1.8" />
  </g>
);

const Axes = () => (
  <g fontFamily="'Liberation Sans', sans-serif" fontSize="10" fill="#111">
    <path d="M1201 661.7V648" stroke="#1e1e9a" strokeWidth="1.2" />
    <polygon points="1201,643 1203,650 1199,650" fill="#1e1e9a" />
    <path d="M1201 661.7L1212 667" stroke="#1a8a2a" strokeWidth="1.2" />
    <polygon points="1217,669.5 1210,669 1212,665" fill="#1a8a2a" />
    <path d="M1201 661.7L1186.7 671.7" stroke="#8a1a1a" strokeWidth="1.2" />
    <text x="1205.5" y="641">Z</text>
    <text x="1218.5" y="669">Y</text>
    <text x="1186" y="671">X</text>
  </g>
);

const LOGO = (
  <Logo>
    <svg viewBox="0 0 22 22" width="22" height="22" aria-hidden="true">
      <path d="M1 0h14v5H6.5v4.5H13v4.5H6.5V22H1z" fill="#d6121c" stroke="#7d0a10" strokeWidth=".7" />
      <circle cx="15.5" cy="15.5" r="4.2" fill="none" stroke="#2a6fc4" strokeWidth="2.6" />
      <circle cx="15.5" cy="15.5" r="6" fill="none" stroke="#2a6fc4" strokeWidth="1.6" strokeDasharray="2 2.7" />
    </svg>
  </Logo>
);

export default function App() {
  return (
    <Window>
      <Global />
      <TitleBar>
        {LOGO}
        <PinDot />
        <TitleText>FreeCAD 0.21.2</TitleText>
        <WinButtons>
          <WinBtn viewBox="0 0 20 20"><path d="M5 10h10" stroke="#d6d8dc" strokeWidth="1.2" /></WinBtn>
          <WinBtn viewBox="0 0 20 20"><rect x="5.5" y="5.5" width="9" height="9" fill="none" stroke="#d6d8dc" strokeWidth="1.2" /></WinBtn>
          <WinBtn viewBox="0 0 20 20"><path d="M5 5l10 10M15 5L5 15" stroke="#d6d8dc" strokeWidth="1.1" /></WinBtn>
        </WinButtons>
      </TitleBar>
      <Content>
        <MenuBar>
          {menuBar.map((m, i) => <MenuItem key={i} $open={i === 6}>{m}</MenuItem>)}
        </MenuBar>
        <ToolRow $h={33}>
          <Grip $ml={4} $mr={3} />
          <Tools names={["newDoc", "open", "save"]} />
          <Grip $ml={5} $mr={1} />
          <Tools names={["undo", "redo"]} />
          <Spacer $w={11} />
          <Tools names={["refresh"]} />
          <Grip $ml={7} $mr={0} />
          <WorkbenchCombo>
            <ComboLabel><Icon name="curvesWB" size={18} />Curves</ComboLabel>
            <ComboArrow>
              <svg width="9" height="6" viewBox="0 0 9 6" aria-hidden="true"><path d="M.5 1l4 4 4-4" fill="none" stroke="#888" /></svg>
            </ComboArrow>
          </WorkbenchCombo>
          <Grip $ml={5} $mr={3} />
          <Tools names={["record"]} />
          <Spacer $w={145} />
          <Tools names={["stop", "selectBox"]} />
          <Spacer $w={11} />
          <Tools names={["arrowL", "arrowR"]} />
          <Spacer $w={1} />
          <Tools names={["boxView"]} />
          <Spacer $w={9} />
          <Tools names={["searchView"]} />
          <Spacer $w={1} />
          <Tools names={["wire"]} />
          <Spacer $w={11} />
          <Tools names={["vFront", "vBack", "vLeft"]} />
          <Spacer $w={12} />
          <Tools names={["vWire1", "vWire2", "vWire3"]} />
          <Spacer $w={9} />
          <Tools names={["ruler"]} />
        </ToolRow>
        <ToolRow $h={28}>
          <Grip $ml={4} $mr={2} />
          <Tools names={["help"]} />
          <Grip $ml={4} $mr={3} />
          <Tools names={["parts", "folder", "boxArrow", "boxArrow2"]} />
          <Grip $ml={5} $mr={1} />
          <Tools names={["line", "arc"]} />
          <Spacer $w={1} />
          <Tools names={["surfY", "sp1", "sp2", "sp3", "sp4", "sp5"]} />
          <Spacer $w={171} />
          <Tools names={["iso"]} />
          <Spacer $w={1} />
          <Tools names={["sketchSurf", "sweep2", "profile", "pipeProfile", "pipeshell", "gordon", "segment", "spring", "sphere", "multiloft", "blendSurf", "blendSolid", "flatten", "rotSweep", "zebraT", "draft", "truncate"]} />
          <Grip $ml={4} $mr={2} />
          <Tools names={["info", "cubeGreenPlane", "cubeGreen", "clipS", "cubeChevron", "gridTarget", "splineChev"]} />
        </ToolRow>
        <Main>
          <Sidebar>
            <DockHeader>
              <DockTitle>Birleşik görünüm</DockTitle>
              <DockButtons>
                <svg width="10" height="10" viewBox="0 0 10 10" aria-hidden="true"><path d="M1 4V1h3M6 1h3v3M9 6v3H6M4 9H1V6" fill="none" stroke="#888" /></svg>
                <svg width="10" height="10" viewBox="0 0 10 10" aria-hidden="true"><path d="M1 1l8 8M9 1L1 9" stroke="#666" strokeWidth="1.3" /></svg>
              </DockButtons>
            </DockHeader>
            <TabStrip>
              <Tab>Model</Tab>
              <Tab $active>Görevler</Tab>
            </TabStrip>
            <Tree>
              <TreeRow>
                <TreeRootBranch>
                  <svg width="16" height="12" viewBox="0 0 16 12" aria-hidden="true"><path d="M3 4l4 4 4-4M7 0v7M11 6h5" fill="none" stroke="#b5b5b5" strokeWidth="1.3" /></svg>
                </TreeRootBranch>
                <RootLabel><Icon name="doc" size={16} /><RowText>RotationSweep_3</RowText></RootLabel>
              </TreeRow>
              <TreeRow>
                <TreeIndent />
                <TreeLabel><Icon name="freehand" size={16} /><RowText>Freehand_BSpline</RowText></TreeLabel>
              </TreeRow>
              <TreeRow>
                <TreeIndent $selected />
                <TreeLabel $selected><Icon name="freehand" size={16} /><RowText>Freehand_BSpline001</RowText></TreeLabel>
              </TreeRow>
              <TreeRow>
                <TreeIndent $selected $end />
                <TreeLabel $selected><Icon name="freehand" size={16} /><RowText>Freehand_BSpline002</RowText></TreeLabel>
              </TreeRow>
            </Tree>
            <Splitter />
            <PropTable>
              <PropHeader>
                <HeadCell>Özellik</HeadCell>
                <HeadCell>Değer</HeadCell>
              </PropHeader>
              <PropBody>
                <GroupRow>Baz</GroupRow>
                <PropRow $alt>
                  <Branch $alt>
                    <Chevron viewBox="0 0 8 11"><path d="M1.5 1l4 4.5-4 4.5" fill="none" stroke="#8a8a8a" strokeWidth="1.4" /></Chevron>
                  </Branch>
                  <PropName>Placement</PropName>
                  <PropValue>[(0,00 0,00 1,00); 0,00 °; (0,00 ...</PropValue>
                </PropRow>
                <PropRow>
                  <Branch $last />
                  <PropName>Label</PropName>
                  <PropValue>Freehand_BSpline001</PropValue>
                </PropRow>
                <GroupRow>Profile</GroupRow>
                <PropRow>
                  <Branch />
                  <PropName>Parametrization</PropName>
                  <PropValue>1,00</PropValue>
                </PropRow>
                <PropRow $alt>
                  <Branch $alt />
                  <PropName>Periodic</PropName>
                  <PropValue>false</PropValue>
                </PropRow>
                <PropRow>
                  <Branch />
                  <PropName>Support</PropName>
                  <PropValue />
                </PropRow>
                <PropRow $alt>
                  <Branch $alt />
                  <PropName>Tangents</PropName>
                  <PropValue>[0,00 0,00 0,00], ...</PropValue>
                </PropRow>
                <PropRow>
                  <Branch $last />
                  <PropName>Tolerance</PropName>
                  <PropValue>0,00</PropValue>
                </PropRow>
              </PropBody>
            </PropTable>
            <SideTabs>
              <Tab $active $lh={27}>Görünüm</Tab>
              <Tab $lh={27}>Veri</Tab>
            </SideTabs>
          </Sidebar>
          <ViewColumn>
            <Viewport>
              <Scene viewBox="369 115 860 575" preserveAspectRatio="none" aria-hidden="true">
                <g fill="none" strokeWidth="0.9">
                  <path d="M781 251C760 238 735 222 705 218C688 216 681 225 680 240C679 262 690 290 692 315C693 330 688 338 676 344" stroke="#4fe54f" />
                  <path d="M554 402C590 378 630 358 676 344C740 322 810 307 875 307C930 307 980 322 1018 338" stroke="#4fe54f" />
                  <path d="M1018 338C1060 357 1102 385 1120 420C1133 447 1115 465 1085 487C1040 520 960 548 890 568C810 590 730 600 644 599" stroke="#111" />
                  <path d="M644 599C580 595 500 580 465 533" stroke="#4fe54f" />
                </g>
                <circle cx="1018" cy="338" r="1.6" fill="#4fe54f" />
                <circle cx="644" cy="599" r="1.6" fill="#4fe54f" />
                <NavCube />
                <Axes />
              </Scene>
            </Viewport>
            <DocTabs>
              <svg width="17" height="17" viewBox="0 0 22 22" aria-hidden="true">
                <path d="M1 0h14v5H6.5v4.5H13v4.5H6.5V22H1z" fill="#d6121c" />
                <circle cx="15.5" cy="15.5" r="4.2" fill="none" stroke="#2a6fc4" strokeWidth="2.6" />
              </svg>
              <RowText>RotationSweep_3 : 1*</RowText>
              <DocClose viewBox="0 0 16 16"><path d="M2 2l12 12M14 2L2 14" stroke="#9a9a9a" strokeWidth="2" /></DocClose>
            </DocTabs>
          </ViewColumn>
        </Main>
        <StatusBar>
          <StatusText>{"Sweep some profiles along a path, and around a point<br><br><b>Usage :</b><br>Select a sweep path and some profiles in the 3D View.<br>If"}</StatusText>
          <StatusCombo $w={95}>
            <Spacer $w={6} />
            <svg width="12" height="16" viewBox="0 0 12 16" aria-hidden="true"><rect x="1.5" y="1.5" width="9" height="13" rx="4.5" fill="none" stroke="#444" strokeWidth="1.2" /><path d="M6 4v3" stroke="#444" strokeWidth="1.6" /></svg>
            Blender
            <Caret />
          </StatusCombo>
          <StatusCombo $w={154}>
            13,95 mm x 9,33 mm
            <Caret />
          </StatusCombo>
          <SizeGrip viewBox="0 0 11 11"><path d="M0 11L11 0M4 11l7-7M8 11l3-3" stroke="#cfcfcf" /></SizeGrip>
        </StatusBar>
        <DropMenu>
          {dropItems.map(([ic, label]) => (
            <DropItem key={label} $hot={label === "Rotation Sweep"} $off={label === "IsoCurve"}>
              <Icon name={ic} size={18} />
              <RowText>{label}</RowText>
            </DropItem>
          ))}
        </DropMenu>
      </Content>
    </Window>
  );
}
